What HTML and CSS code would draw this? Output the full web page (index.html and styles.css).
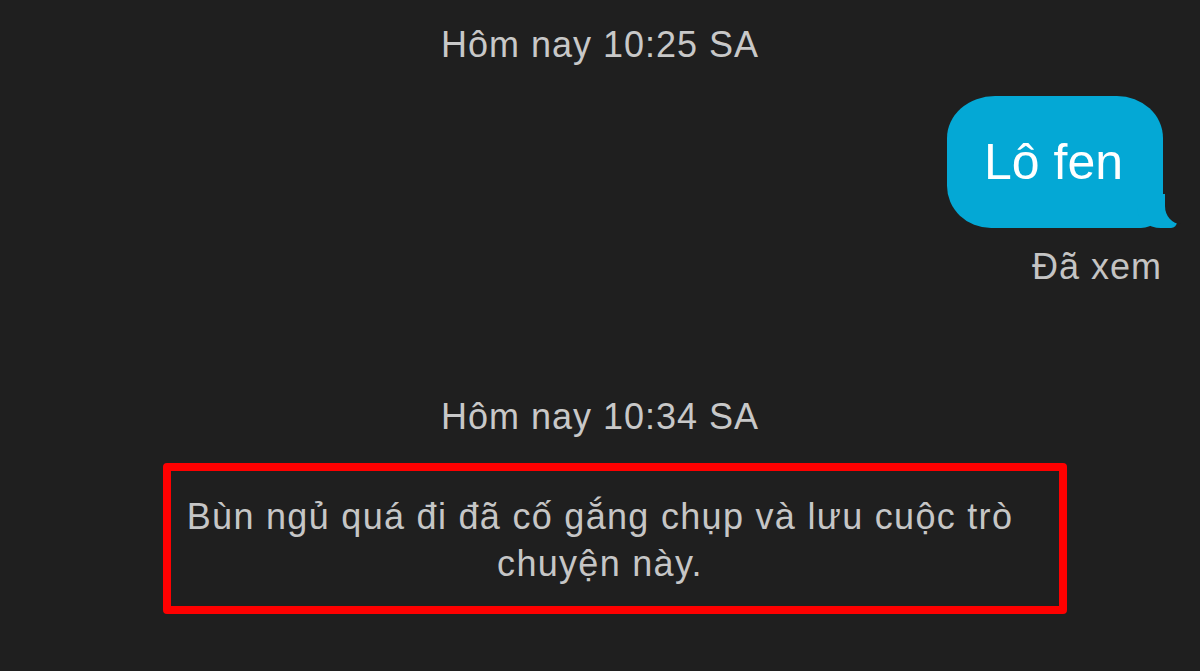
FILE: index.html
```html
<!DOCTYPE html>
<html lang="vi">
<head>
<meta charset="utf-8">
<title>Tin nhắn</title>
<link rel="stylesheet" href="styles.css">
</head>
<body>
<main class="chat">
  <div class="stamp stamp-first">Hôm nay 10:25 SA</div>
  <div class="row-me">
    <div class="bubble">Lô fen</div>
  </div>
  <div class="seen">Đã xem</div>
  <div class="stamp stamp-second">Hôm nay 10:34 SA</div>
  <div class="notice">
    <p class="notice-text">Bùn ngủ quá đi đã cố gắng chụp và lưu cuộc trò chuyện này.</p>
  </div>
</main>
</body>
</html>
```
FILE: styles.css
```css
html, body {
  margin: 0;
  padding: 0;
  background: #1f1f1f;
}
body {
  width: 1200px;
  height: 671px;
  overflow: hidden;
  font-family: "Liberation Sans", Arial, sans-serif;
}
.chat {
  display: flex;
  flex-direction: column;
}
.stamp {
  font-size: 36px;
  line-height: 42px;
  letter-spacing: 1px;
  color: #c8c8c8;
  text-align: center;
}
.stamp-first {
  padding-top: 24px;
}
.row-me {
  display: flex;
  justify-content: flex-end;
  padding-right: 37px;
  margin-top: 30px;
}
.bubble {
  position: relative;
  box-sizing: border-box;
  height: 132px;
  padding: 0 40px 0 37px;
  display: flex;
  align-items: center;
  background: #04a8d5;
  color: #ffffff;
  font-size: 50px;
  border-radius: 48px 46px 22px 44px / 42px 42px 22px 42px;
}
.bubble::before {
  content: "";
  position: absolute;
  right: -14px;
  bottom: 0;
  width: 40px;
  height: 34px;
  background: #04a8d5;
  border-bottom-left-radius: 24px 20px;
  border-bottom-right-radius: 6px 6px;
}
.bubble::after {
  content: "";
  position: absolute;
  right: -34px;
  bottom: 4px;
  width: 32px;
  height: 40px;
  background: #1f1f1f;
  border-bottom-left-radius: 16px 18px;
}
.seen {
  margin-top: 18px;
  padding-right: 38px;
  text-align: right;
  font-size: 36px;
  line-height: 42px;
  letter-spacing: 1px;
  color: #c4c4c4;
}
.stamp-second {
  margin-top: 108px;
}
.notice {
  margin: 25px 0 0 163px;
  width: 904px;
  box-sizing: border-box;
  border: 8px solid #fe0000;
  border-radius: 4px;
  padding: 22px 30px 19px 0;
}
.notice-text {
  margin: 0;
  font-size: 36px;
  line-height: 47px;
  letter-spacing: 1.3px;
  color: #c6c6c6;
  text-align: center;
}
```
